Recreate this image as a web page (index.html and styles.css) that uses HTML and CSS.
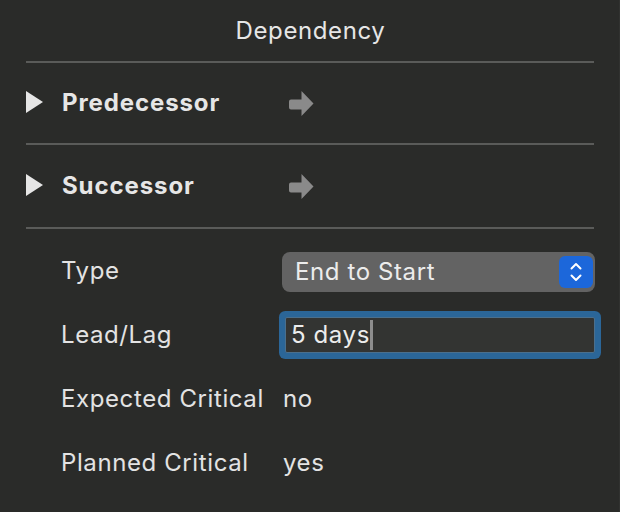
FILE: index.html
```html
<!DOCTYPE html>
<html>
<head>
<meta charset="utf-8">
<link rel="stylesheet" href="styles.css">
</head>
<body>
<div class="panel">
  <header class="title">Dependency</header>
  <div class="sep"></div>
  <div class="disclosure first">
    <span class="tri"></span>
    <span class="dlabel">Predecessor</span>
    <svg class="arrow" width="25" height="25" viewBox="0 0 25 25"><path d="M2 8.5H12.5V0L24.5 12.5L12.5 25V18.5H2Q0 18.5 0 16.5V10.5Q0 8.5 2 8.5Z"/></svg>
  </div>
  <div class="sep"></div>
  <div class="disclosure second">
    <span class="tri"></span>
    <span class="dlabel">Successor</span>
    <svg class="arrow" width="25" height="25" viewBox="0 0 25 25"><path d="M2 8.5H12.5V0L24.5 12.5L12.5 25V18.5H2Q0 18.5 0 16.5V10.5Q0 8.5 2 8.5Z"/></svg>
  </div>
  <div class="sep"></div>
  <div class="props">
    <div class="prop">
      <span class="label">Type</span>
      <div class="popup">
        <span class="popup-text">End to Start</span>
        <span class="stepper">
          <svg width="14" height="22" viewBox="0 0 14 22"><path d="M2.5 7.5L7 3L11.5 7.5M2.5 14.5L7 19L11.5 14.5"/></svg>
        </span>
      </div>
    </div>
    <div class="prop">
      <span class="label">Lead/Lag</span>
      <div class="field"><span class="field-text">5 days</span><span class="caret"></span></div>
    </div>
    <div class="prop">
      <span class="label">Expected Critical</span>
      <span class="value">no</span>
    </div>
    <div class="prop">
      <span class="label">Planned Critical</span>
      <span class="value">yes</span>
    </div>
  </div>
</div>
</body>
</html>
```
FILE: styles.css
```css
html, body {
  margin: 0;
  padding: 0;
  background: #2a2b29;
}
body {
  font-family: Inter, "Noto Sans", sans-serif;
  font-size: 24px;
  letter-spacing: 0.6px;
  color: #e3e3e3;
}
.panel {
  width: 620px;
  height: 512px;
  box-sizing: border-box;
  border-right: 1px solid #313230;
  overflow: hidden;
}
.title {
  height: 61px;
  display: flex;
  align-items: center;
  justify-content: center;
  line-height: 30px;
  color: #e6e6e6;
  padding-left: 2px;
}
.sep {
  height: 2px;
  margin: 0 25px 0 26px;
  background: #5a5b59;
}
.disclosure {
  display: grid;
  grid-template-columns: 36px 227px auto;
  align-items: center;
  padding-left: 26px;
  line-height: 30px;
}
.disclosure.first { height: 80px; }
.disclosure.second { height: 82px; }
.tri {
  width: 0;
  height: 0;
  border-left: 17px solid #e6e6e6;
  border-top: 11px solid transparent;
  border-bottom: 11px solid transparent;
  margin-top: -3px;
}
.dlabel {
  font-weight: 700;
  letter-spacing: 0.9px;
  color: #e6e6e6;
}
.arrow path {
  fill: #8a8a8a;
}
.props {
  padding-top: 10px;
}
.prop {
  display: grid;
  grid-template-columns: 221px 1fr;
  align-items: center;
  height: 64px;
  padding-left: 61px;
  line-height: 30px;
}
.label, .value {
  color: #e3e3e3;
}
.value {
  padding-left: 1px;
}
.popup {
  width: 313px;
  height: 40px;
  box-sizing: border-box;
  border-radius: 8px;
  background: #636363;
  display: flex;
  align-items: center;
  justify-content: space-between;
  padding: 0 2px 0 13px;
  margin-top: 1px;
}
.popup-text {
  color: #ececec;
}
.stepper {
  width: 34px;
  height: 32px;
  border-radius: 6px;
  background: #1c67da;
  display: flex;
  align-items: center;
  justify-content: center;
}
.stepper path {
  fill: none;
  stroke: #ffffff;
  stroke-width: 2;
  stroke-linecap: round;
  stroke-linejoin: round;
}
.field {
  margin-left: 3px;
  width: 310px;
  height: 36px;
  box-sizing: border-box;
  background: #333432;
  border: 1px solid #4b6f8c;
  box-shadow: 0 0 0 6px #2b6698;
  border-radius: 2px;
  display: flex;
  align-items: center;
  padding-left: 5px;
}
.field-text {
  color: #ececec;
}
.caret {
  width: 3px;
  height: 30px;
  background: #8d8d8d;
}
```
